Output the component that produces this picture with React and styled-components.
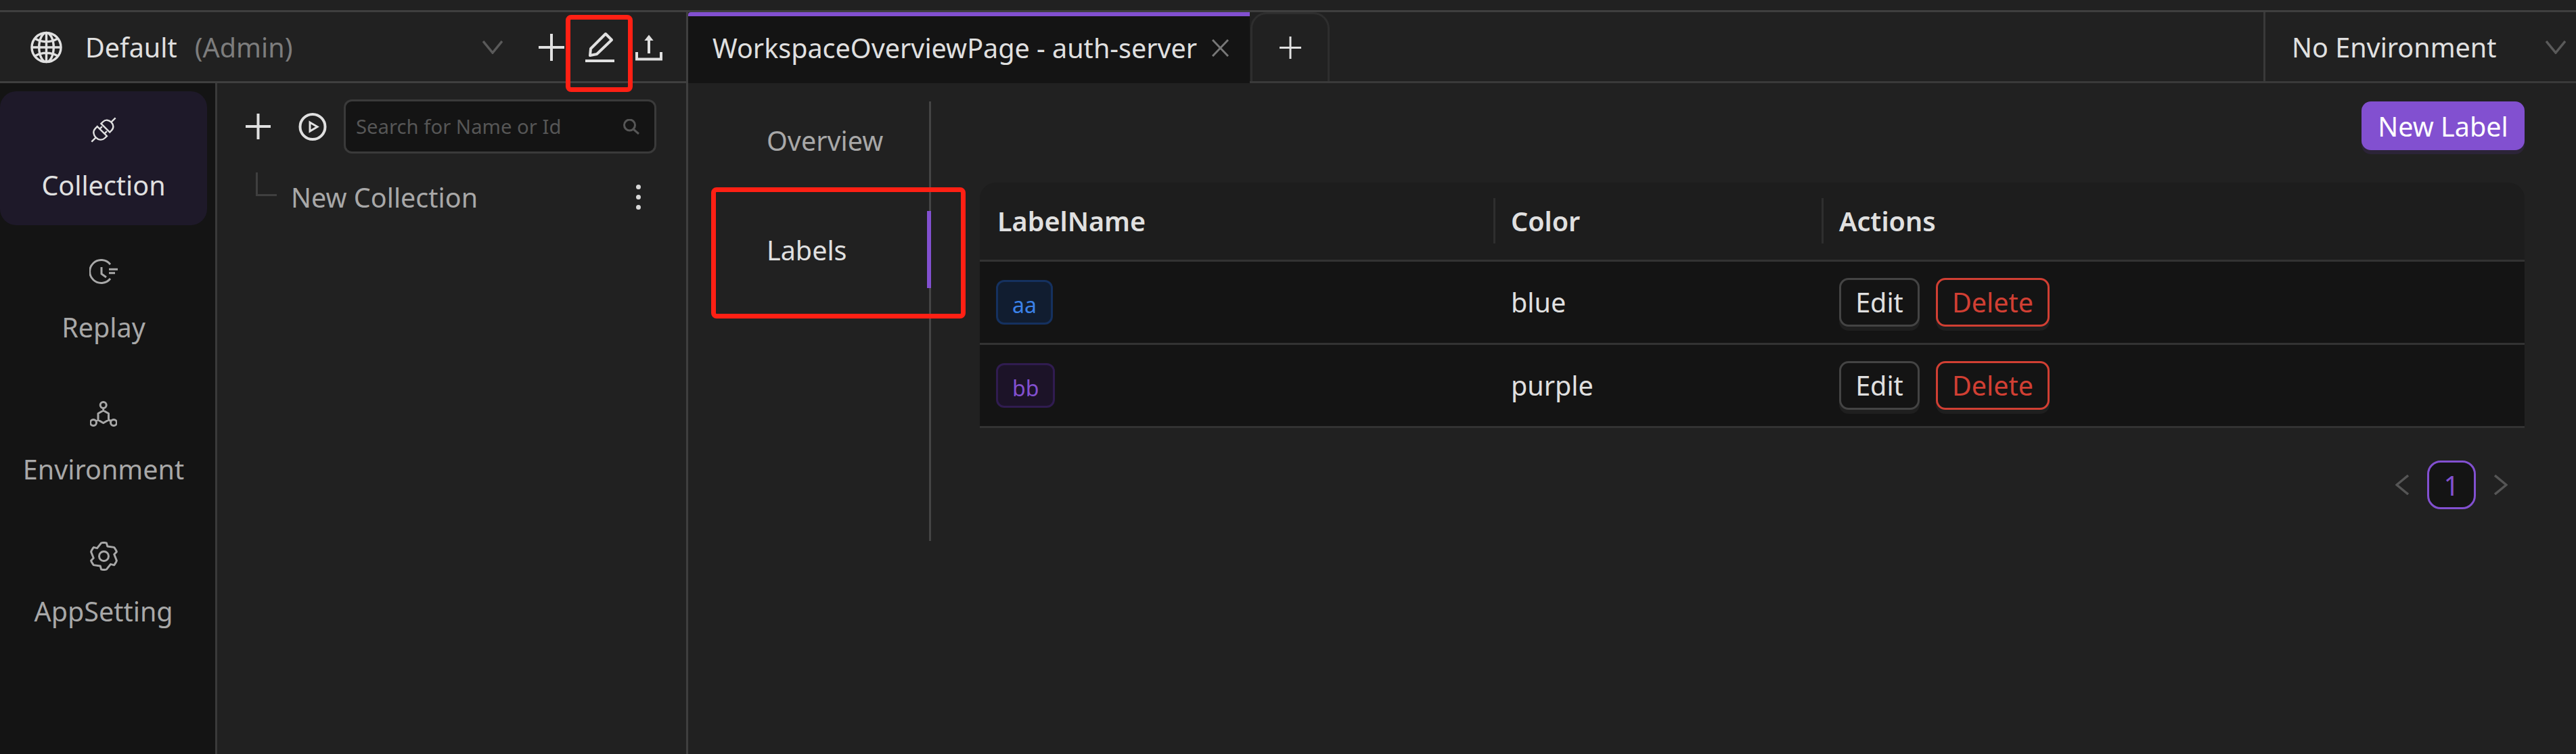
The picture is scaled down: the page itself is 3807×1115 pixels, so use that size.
import React from 'react';
import styled, { createGlobalStyle } from 'styled-components';

const Global = createGlobalStyle`
  html, body { margin: 0; padding: 0; background: #212121; }
  * { box-sizing: border-box; }
  body { font-family: "Noto Sans", "Open Sans", sans-serif; font-size: 39.5px; color: #e0e0e0; }
`;

const Page = styled.div`
  position: relative; width: 3807px; height: 1115px; overflow: hidden;
  background: #212121; padding-top: 15px;
`;
const Frame = styled.div`
  display: flex; height: 1100px; border-top: 3px solid #3f3f3f;
`;
const LeftColumn = styled.div`
  width: 1014px; flex: none; display: flex; flex-direction: column;
`;
const LeftHeader = styled.header`
  height: 105px; flex: none; display: flex; align-items: center;
  padding: 2px 35px 0 45px; border-bottom: 3px solid #3f3f3f;
`;
const WorkspaceName = styled.span`margin-left: 34px;`;
const WorkspaceRole = styled.span`margin-left: 26px; color: #7d7d7d;`;
const HeaderIcons = styled.div`
  margin-left: 53px; display: flex; align-items: center; gap: 29px;
`;
const Chevron = styled.svg`
  flex: none; width: 30px; height: 20px; fill: none; stroke: #5a5a5a; stroke-width: 3.5;
  margin-left: ${p => (p.$push ? 'auto' : '0')};
`;
const Icon = styled.svg`
  flex: none; display: block; fill: none; stroke: currentColor;
  stroke-width: ${p => p.$sw || 3.5};
`;
const LeftBody = styled.div`flex: 1; display: flex; min-height: 0;`;
const Sidebar = styled.nav`
  width: 321px; flex: none; background: #141414; border-right: 3px solid #3a3a3a;
  padding-top: 12px; display: flex; flex-direction: column; gap: 12px;
`;
const SideItem = styled.div`
  width: 306px; height: 198px; border-radius: 24px; display: flex; flex-direction: column;
  align-items: center; background: ${p => (p.$active ? '#1e1929' : 'transparent')};
  color: ${p => (p.$active ? '#e0e0e0' : '#a8a8a8')};
`;
const SideIconSlot = styled.div`
  height: 44px; margin-top: 35px; display: flex; align-items: center; justify-content: center;
`;
const SideLabel = styled.div`margin-top: 35px; line-height: 50px;`;
const Panel = styled.div`flex: 1; padding-top: 24px; min-width: 0;`;
const PanelTools = styled.div`
  display: flex; align-items: center; padding-left: 42px; color: #e0e0e0;
`;
const PlayGap = styled.div`margin-left: 41px;`;
const SearchBox = styled.div`
  margin-left: 25px; width: 462px; height: 80px; display: flex; align-items: center;
  justify-content: space-between; padding: 0 22px 0 15px; background: #141414;
  border: 3px solid #3a3a3a; border-radius: 12px; color: #565656; font-size: 29.3px;
`;
const TreeRow = styled.div`
  margin-top: 28px; display: flex; align-items: flex-start; padding: 0 67px 0 57px;
`;
const TreeElbow = styled.div`
  width: 31px; height: 35px; flex: none; border-left: 3px solid #3f3f3f; border-bottom: 3px solid #3f3f3f;
`;
const TreeName = styled.div`
  margin-left: 21px; margin-top: 12px; line-height: 50px; color: #a8a8a8;
`;
const Kebab = styled.div`
  margin-left: auto; margin-top: 18px; display: flex; flex-direction: column; gap: 8px;
`;
const Dot = styled.i`display: block; width: 7px; height: 7px; border-radius: 50%; background: #d8d8d8;`;

const RightColumn = styled.div`
  flex: 1; display: flex; flex-direction: column; min-width: 0; border-left: 3px solid #3f3f3f;
`;
const TabBar = styled.div`
  height: 105px; flex: none; display: flex; border-bottom: 3px solid #3a3a3a;
`;
const ActiveTab = styled.div`
  width: 830px; height: 105px; flex: none; background: #141414; border-top: 6px solid #8250d0;
  display: flex; align-items: center; padding: 0 31px 6px 36px; justify-content: space-between;
  border-top-left-radius: 4px;
`;
const CloseColor = styled.div`color: #777; display: flex;`;
const AddTab = styled.div`
  margin-left: 1px; width: 117px; height: 102px; flex: none; display: flex; align-items: center; justify-content: center;
  border: 3px solid #2e2e2e; border-bottom: none; border-radius: 24px 24px 0 0;
`;
const EnvSelect = styled.div`
  margin-left: auto; width: 462px; flex: none; border-left: 3px solid #3a3a3a;
  display: flex; align-items: center; justify-content: space-between; padding: 2px 15px 0 39px;
`;
const Content = styled.div`flex: 1; display: flex; min-height: 0; padding-top: 27px;`;
const SideNav = styled.div`
  position: relative; width: 359px; height: 650px; flex: none; border-right: 3px solid #444;
  display: flex; flex-direction: column; gap: 48px;
`;
const NavItem = styled.div`
  position: relative; height: 114px; display: flex; align-items: center; padding: 2px 0 0 116px;
  color: ${p => (p.$active ? '#e0e0e0' : '#a8a8a8')};
`;
const NavMark = styled.i`
  position: absolute; right: -3px; top: 0; bottom: 0; width: 6px; background: #8250d0;
`;
const Main = styled.div`margin-left: 72px; width: 2283px; flex: none;`;
const MainTop = styled.div`display: flex; justify-content: flex-end; margin-bottom: 48px;`;
const PrimaryButton = styled.div`
  width: 241px; height: 72px; padding-top: 2px; border-radius: 14px; background: #8250d0; color: #fff;
  display: flex; align-items: center; justify-content: center; box-shadow: 0 6px 0 #2c2438;
`;
const Table = styled.div`width: 100%;`;
const Row = styled.div`
  display: grid; grid-template-columns: 759px 485px 1fr; align-items: center;
  height: ${p => (p.$head ? 117 : 123)}px; border-bottom: 3px solid #333;
  background: ${p => (p.$head ? '#1d1d1d' : '#141414')};
  border-radius: ${p => (p.$head ? '24px 24px 0 0' : '0')};
  font-weight: ${p => (p.$head ? 600 : 400)};
`;
const Cell = styled.div`
  position: relative; height: 100%; display: flex; align-items: center; padding-left: 26px; gap: 24px;
`;
const HeadDivider = styled.i`
  position: absolute; left: 0; top: 23px; width: 3px; height: 67px; background: #2e2e2e;
`;
const Tag = styled.div`
  margin-left: -2px; height: 66px; padding: 6px 21px 0; display: flex; align-items: center; border-radius: 12px;
  font-size: 32px; border: 3px solid ${p => p.$border}; background: ${p => p.$bg}; color: ${p => p.$fg};
`;
const ActionButton = styled.div`
  height: 72px; width: ${p => (p.$danger ? 168 : 119)}px; border-radius: 14px; display: flex;
  align-items: center; justify-content: center; background: #141414;
  border: 3px solid ${p => (p.$danger ? '#d13f33' : '#444')};
  color: ${p => (p.$danger ? '#d13f33' : '#e0e0e0')}; box-shadow: 0 6px 0 #1f1f1f;
`;
const Pager = styled.div`
  margin-top: 48px; padding-right: 25px; display: flex; justify-content: flex-end; align-items: center; gap: 27px;
`;
const PageBox = styled.div`
  width: 72px; height: 72px; border: 3px solid #8250d0; border-radius: 20px; background: #141414;
  color: #8250d0; display: flex; align-items: center; justify-content: center; font-size: 40px;
`;
const PagerArrow = styled.svg`
  width: 20px; height: 30px; fill: none; stroke: #555; stroke-width: 3.5; flex: none;
`;
const Annotation = styled.div`
  position: absolute; left: ${p => p.$x}px; top: ${p => p.$y}px; width: ${p => p.$w}px; height: ${p => p.$h}px;
  border: 7px solid #ff2014; border-radius: 8px; pointer-events: none;
`;

const gearPath = (() => {
  const pts = [];
  const cx = 20.5, cy = 21.5;
  for (let k = 0; k < 6; k++) {
    const a = -90 + 60 * k;
    [[-11, 20], [-6, 20], [6, 20], [11, 20], [20, 15.5]].forEach(([d, r]) => {
      const t = ((a + d) * Math.PI) / 180;
      pts.push(`${(cx + r * Math.cos(t)).toFixed(2)} ${(cy + r * Math.sin(t)).toFixed(2)}`);
    });
  }
  return `M${pts.join('L')}Z`;
})();

const ChevronDown = ({ push }) => (
  <Chevron $push={push} viewBox="0 0 30 20"><polyline points="1,1 15,18 29,1" /></Chevron>
);
const Plus = ({ w, h, sw }) => (
  <Icon $sw={sw} width={w} height={h} viewBox={`0 0 ${w} ${h}`}>
    <path d={`M0 ${h / 2}H${w}M${w / 2} 0V${h}`} />
  </Icon>
);
const Globe = () => (
  <Icon $sw={3.5} width="47" height="48" viewBox="0 0 48 48">
    <circle cx="24" cy="24" r="22" />
    <ellipse cx="24" cy="24" rx="11" ry="22" />
    <path d="M24 2V46M2 24H46M7 11Q24 20 41 11M7 37Q24 28 41 37" />
  </Icon>
);
const Pencil = () => (
  <Icon $sw={4} width="47" height="46" viewBox="0 0 47 46">
    <path d="M9 35L10 25L32 3L41 12L19 33Z" strokeLinejoin="round" />
    <path d="M2 43H45" />
  </Icon>
);
const Upload = () => (
  <Icon $sw={4} width="40" height="39" viewBox="0 0 40 39">
    <path d="M20 .5L26.7 9H13.3Z" fill="currentColor" stroke="none" />
    <path d="M20 9V28M2 26V36.5H38V26" />
  </Icon>
);
const PlugIcon = () => (
  <Icon $sw={2.4} width="40" height="40" viewBox="0 0 40 40">
    <g transform="rotate(-45 20 20)">
      <path d="M-5 20H4M36 20H45M17 10V30H13C7 30 4 25 4 20C4 15 7 10 13 10ZM24 11V29H28C33 29 36 25 36 20C36 15 33 11 28 11Z" />
      <path d="M17 15H22M17 25H22" />
    </g>
  </Icon>
);
const ReplayIcon = () => (
  <Icon $sw={3} width="42" height="38" viewBox="0 0 42 38">
    <path d="M31 8A17 17 0 1 0 31 29" />
    <path d="M18 12V22L25 27M29 15.3H42M29 20.7H38" />
  </Icon>
);
const EnvIcon = () => (
  <Icon $sw={3} width="40" height="38" viewBox="0 0 40 38">
    <circle cx="19.7" cy="6" r="4.5" />
    <circle cx="5" cy="32" r="4.5" />
    <circle cx="35" cy="32" r="4.5" />
    <path d="M19.7 14L27.5 18.5V28L19.7 32.5L12 28V18.5ZM19.7 10.5V14M9 29.5L12 28M31 29.5L27.5 28" strokeLinejoin="round" />
  </Icon>
);
const GearIcon = () => (
  <Icon $sw={3} width="41" height="43" viewBox="0 0 41 43">
    <path d={gearPath} strokeLinejoin="round" />
    <circle cx="20.5" cy="21.5" r="7" />
  </Icon>
);
const PlayIcon = () => (
  <Icon $sw={4} width="42" height="41" viewBox="0 0 42 41">
    <circle cx="21" cy="20.5" r="18.5" />
    <path d="M17 14L28 20.5L17 27Z" strokeWidth="3" />
  </Icon>
);
const SearchIcon = () => (
  <Icon $sw={3} width="24" height="23" viewBox="0 0 24 23">
    <circle cx="9.5" cy="9" r="8" />
    <path d="M15 15L23 22" />
  </Icon>
);
const CloseIcon = () => (
  <Icon $sw={3} width="25" height="26" viewBox="0 0 25 26">
    <path d="M1 1L24 25M24 1L1 25" />
  </Icon>
);

const navItems = [
  { label: 'Collection', icon: <PlugIcon />, active: true },
  { label: 'Replay', icon: <ReplayIcon /> },
  { label: 'Environment', icon: <EnvIcon /> },
  { label: 'AppSetting', icon: <GearIcon /> },
];

const labels = [
  { name: 'aa', color: 'blue', border: '#15315f', bg: '#111d30', fg: '#3b82e8' },
  { name: 'bb', color: 'purple', border: '#301c50', bg: '#1c1328', fg: '#8250d0' },
];

export default function App() {
  return (
    <Page>
      <Global />
      <Frame>
        <LeftColumn>
          <LeftHeader>
            <Globe />
            <WorkspaceName>Default</WorkspaceName>
            <WorkspaceRole>(Admin)</WorkspaceRole>
            <ChevronDown push />
            <HeaderIcons>
              <Plus w={38} h={40} sw={4} />
              <Pencil />
              <Upload />
            </HeaderIcons>
          </LeftHeader>
          <LeftBody>
            <Sidebar>
              {navItems.map(item => (
                <SideItem key={item.label} $active={item.active}>
                  <SideIconSlot>{item.icon}</SideIconSlot>
                  <SideLabel>{item.label}</SideLabel>
                </SideItem>
              ))}
            </Sidebar>
            <Panel>
              <PanelTools>
                <Plus w={37} h={38} sw={4} />
                <PlayGap><PlayIcon /></PlayGap>
                <SearchBox>
                  <span>Search for Name or Id</span>
                  <SearchIcon />
                </SearchBox>
              </PanelTools>
              <TreeRow>
                <TreeElbow />
                <TreeName>New Collection</TreeName>
                <Kebab><Dot /><Dot /><Dot /></Kebab>
              </TreeRow>
            </Panel>
          </LeftBody>
        </LeftColumn>
        <RightColumn>
          <TabBar>
            <ActiveTab>
              <span>WorkspaceOverviewPage - auth-server</span>
              <CloseColor><CloseIcon /></CloseColor>
            </ActiveTab>
            <AddTab><Plus w={32} h={33} sw={3} /></AddTab>
            <EnvSelect>
              <span>No Environment</span>
              <ChevronDown />
            </EnvSelect>
          </TabBar>
          <Content>
            <SideNav>
              <NavItem>Overview</NavItem>
              <NavItem $active>Labels<NavMark /></NavItem>
            </SideNav>
            <Main>
              <MainTop><PrimaryButton>New Label</PrimaryButton></MainTop>
              <Table>
                <Row $head>
                  <Cell>LabelName</Cell>
                  <Cell><HeadDivider />Color</Cell>
                  <Cell><HeadDivider />Actions</Cell>
                </Row>
                {labels.map(l => (
                  <Row key={l.name}>
                    <Cell><Tag $border={l.border} $bg={l.bg} $fg={l.fg}>{l.name}</Tag></Cell>
                    <Cell>{l.color}</Cell>
                    <Cell>
                      <ActionButton>Edit</ActionButton>
                      <ActionButton $danger>Delete</ActionButton>
                    </Cell>
                  </Row>
                ))}
              </Table>
              <Pager>
                <PagerArrow viewBox="0 0 20 30"><polyline points="19,1 2,15 19,29" /></PagerArrow>
                <PageBox>1</PageBox>
                <PagerArrow viewBox="0 0 20 30"><polyline points="1,1 18,15 1,29" /></PagerArrow>
              </Pager>
            </Main>
          </Content>
        </RightColumn>
      </Frame>
      <Annotation $x={836} $y={22} $w={99} $h={114} />
      <Annotation $x={1051} $y={277} $w={376} $h={194} />
    </Page>
  );
}
